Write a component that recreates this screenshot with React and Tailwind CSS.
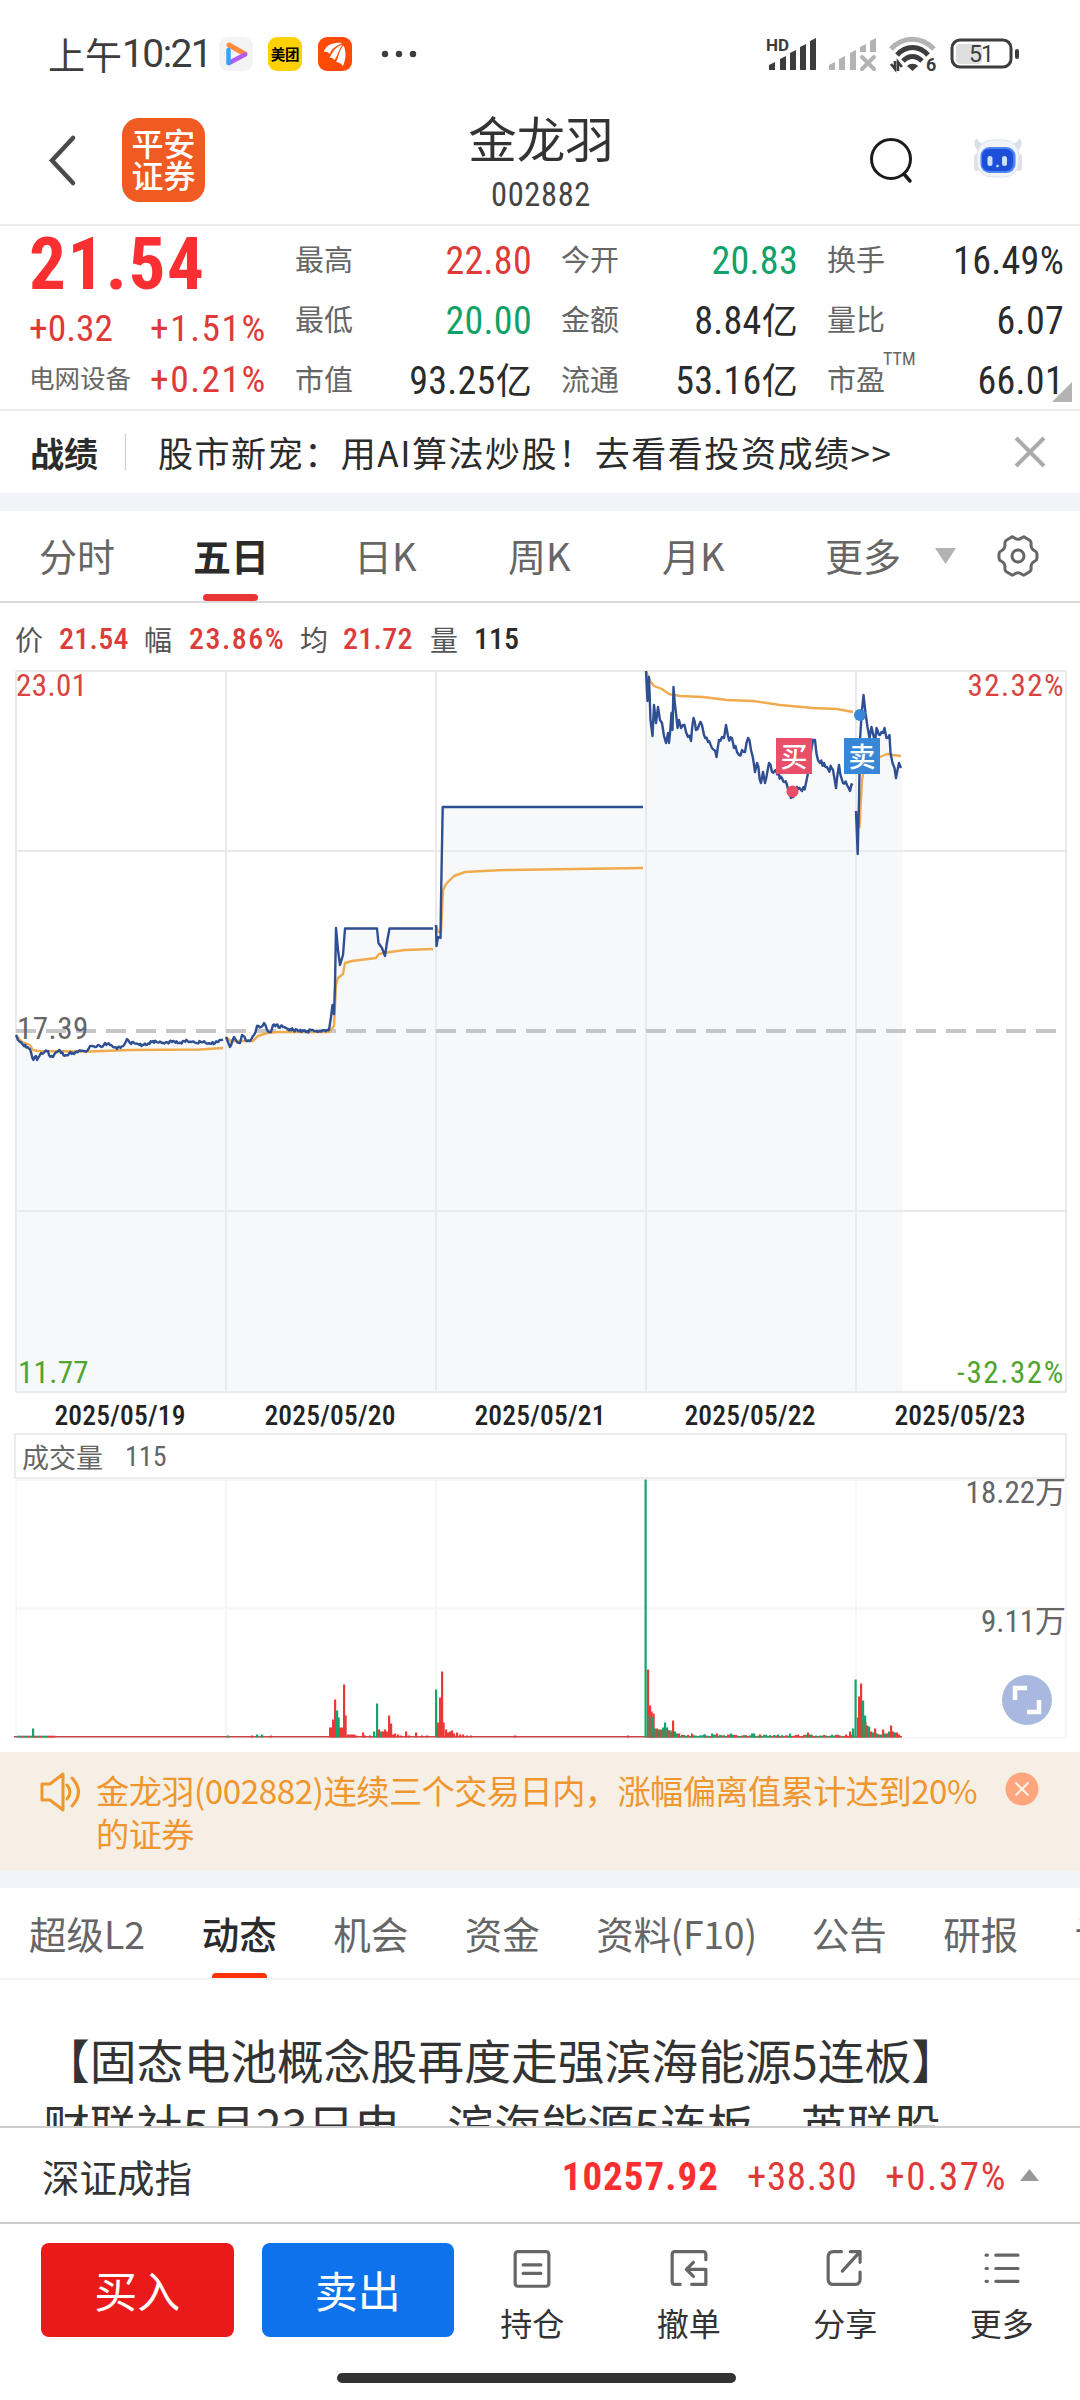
const RED = 'text-[#e03a38]';
const GREEN = 'text-[#0fa268]';
const DARK = 'text-[#2b2b2b]';

const quoteColumns = [
  [
    { label: '最高', value: '22.80', color: RED },
    { label: '最低', value: '20.00', color: GREEN },
    { label: '市值', value: '93.25亿', color: DARK }
  ],
  [
    { label: '今开', value: '20.83', color: GREEN },
    { label: '金额', value: '8.84亿', color: DARK },
    { label: '流通', value: '53.16亿', color: DARK }
  ],
  [
    { label: '换手', value: '16.49%', color: DARK },
    { label: '量比', value: '6.07', color: DARK },
    { label: '市盈', sup: 'TTM', value: '66.01', color: DARK }
  ]
];

const dates = ['2025/05/19', '2025/05/20', '2025/05/21', '2025/05/22', '2025/05/23'];

// Price series, one per trading day. noise is the jitter between the key points
const days = [
  {
    noise: 1.6,
    price: [[16,1035],[18,1040],[20,1042],[23,1045],[27.5,1047],[31,1052],[33.4,1060],[36,1056],[37,1060],[41,1053],[48,1051],[49,1055],[53,1057],[57,1052],[59.5,1050],[61,1053],[66,1055],[70.5,1052],[74,1054],[81,1051],[87,1051],[90,1046],[95,1047],[98,1045],[101.5,1047],[105,1043],[110,1045],[113,1047],[117,1049],[124,1045],[127,1039],[130,1043],[138,1044],[146,1045],[153,1041],[162,1043],[172,1042],[179,1043],[184,1041],[191,1042],[196,1043],[203,1042],[215,1043],[223,1039.5]],
    avg: [[16,1035],[22,1042],[30,1045],[33,1050],[38,1051],[90,1051.5],[130,1050],[200,1049.5],[223,1048]]
  },
  {
    noise: 1.6,
    price: [[226,1037],[228,1042],[230,1047],[234,1037],[237,1042],[240,1043],[242,1035],[247,1041],[250,1041],[254,1035],[257,1026],[261,1027],[264,1023],[267,1030],[271,1032],[273,1025],[283,1027],[290,1029],[298,1031],[306,1032],[312,1030],[320,1031],[329,1030],[331,1017],[332.5,1005],[334,1014],[335,985],[336,928]],
    flat: [[336,928],[338,950],[340,965],[343,955],[345,928.5],[377,928.5],[378.5,943],[382,948],[385,956],[387,942],[389.5,928.5],[433,928.5]],
    avg: [[226,1037],[231,1041],[253,1041],[258,1036],[267,1033],[278,1032],[329,1032],[334,1026],[336,985],[338,978],[343,974],[345,963],[352,961],[376,958],[379,954],[390,952],[405,950],[433,949]]
  },
  {
    noise: 0,
    price: [[436,925],[436.5,946],[438,937],[440.5,938],[441,900],[442.7,807],[643,807]],
    avg: [[436,925],[438,932],[441,932],[443,890],[446,884],[450,880],[454,876],[465,872],[483,871],[505,870],[575,869],[643,868]]
  },
  {
    noise: 4,
    price: [[646,671],[647.5,701],[649,677],[650.5,720],[652.5,736],[654,705],[656,723],[658,707],[660,720],[662,723],[664,736],[666,743],[668,733],[669,743],[671.5,713],[672.5,730],[673.5,687],[676,713],[677.5,728],[679,720],[681,728],[683,725],[686,732],[688,737],[691,741],[693.5,718],[696,730],[699,725],[702,725],[704,735],[708,742],[712,748],[714,750],[716.5,757],[719,740],[722,737],[724,738],[726,725],[728,736],[732,738],[734,748],[737,752],[739,755],[742,750],[745,752],[748,738],[751,750],[753,758],[755,772],[757,763],[761,783],[763,772],[765,783],[769,763],[772,772],[776,770],[782,778],[787,785],[792,797],[797,787],[802,791],[806,783],[810,760],[813,740],[815,740],[818,760],[820,763],[824,763],[827,767],[833,770],[836,788],[839,765],[843,783],[847,785],[850,791],[853,785]],
    avg: [[646,671],[650,681],[654,686],[662,689],[669,694],[680,696],[703,697],[727,700],[753,701],[780,705],[813,708],[837,709],[853,712]]
  },
  {
    noise: 3,
    price: [[856,811],[857.7,854],[859,800],[860,740],[861.5,715],[863.5,695],[865.5,713],[867.5,727],[869.5,738],[871.5,727],[875,743],[876.5,728],[880,735],[883,733],[884.5,728],[886.5,738],[889.5,735],[890.5,753],[892.5,763],[894.5,768],[896,778],[897.5,770],[899,763],[901,768]],
    avg: [[856,811],[858,827],[859.5,827],[862,780],[865,763],[880,757],[887,754],[893,755],[901,756]]
  }
];

function rand(seed) {
  const v = Math.sin(seed * 127.1) * 43758.5453;
  return v - Math.floor(v) - 0.5;
}

// Fill the gaps between the key points with small minute-by-minute moves
function jitter(points, noise) {
  if (!noise) return points;
  const out = [points[0]];
  for (let i = 1; i < points.length; i++) {
    const [x0, y0] = points[i - 1];
    const [x1, y1] = points[i];
    const steps = Math.floor((x1 - x0) / 1.1);
    for (let s = 1; s < steps; s++) {
      const x = x0 + ((x1 - x0) * s) / steps;
      const y = y0 + ((y1 - y0) * s) / steps;
      out.push([x, y + rand(x) * 2 * noise]);
    }
    out.push([x1, y1]);
  }
  return out;
}

const toPoints = (points) => points.map((p) => p.join(',')).join(' ');

// [x, height, r = up / g = down]
const volumeBars = [
  [33,9,'g'],[228,2,'g'],[252,2,'r'],[257,3,'g'],[262,3,'g'],[271,2,'r'],
  [330,10,'r'],[332,10,'r'],[333,18,'r'],[335,38,'r'],[337,27,'g'],[338.5,20,'g'],[340,10,'r'],[342,10,'r'],[344,53,'r'],[345.5,22,'r'],
  [348,3,'r'],[350,3,'r'],[352,3,'r'],[354,3,'r'],[356,2,'r'],[363,5,'r'],[365,2,'r'],[370,2,'r'],[374,6,'g'],[377,34,'g'],[379,8,'r'],[381,6,'g'],[383,6,'r'],[385,8,'r'],[387,6,'r'],[389,22,'r'],[391,14,'r'],[393,3,'r'],[395,4,'r'],[398,3,'r'],[401,2,'r'],[406,6,'r'],[409,2,'r'],[416,5,'r'],[422,2,'r'],[427,2,'r'],
  [436,48,'g'],[438,15,'r'],[440,40,'r'],[442,66,'r'],[443.5,15,'r'],[446,8,'r'],[448,5,'r'],[450,6,'r'],[452,7,'r'],[454,4,'r'],[457,5,'r'],[460,3,'r'],[463,3,'r'],[467,2,'r'],[471,2,'r'],[515,2,'r'],[628,2,'r'],
  [648,68,'r'],[650,32,'r'],[649.5,22,'g'],[651.5,26,'r'],[653.5,24,'r'],[652.5,20,'g'],[655,9,'g'],[657,9,'r'],[659,8,'g'],[661,8,'r'],[663,10,'g'],[665,15,'g'],[667,10,'g'],[669,7,'r'],[671,6,'g'],[673,17,'r'],[675,6,'g'],[677,4,'g'],[679,4,'r'],[645.5,258,'g'],
  [692,4,'r'],[705,3,'g'],[712,4,'g'],[717,4,'r'],[731,4,'g'],[752,4,'g'],[754,4,'g'],[760,3,'r'],[778,3,'g'],[790,4,'g'],[808,5,'r'],[811,3,'g'],[838,2,'r'],[846,3,'r'],[850,6,'r'],[853,9,'g'],
  [859,41,'r'],[861,54,'r'],[858,20,'r'],[855.5,58,'g'],[863,37,'g'],[865,22,'g'],[867,12,'r'],[869,11,'g'],[871,6,'r'],[873,5,'g'],[875,9,'r'],[877,4,'g'],[879,3,'r'],[881,3,'g'],[883,8,'r'],[885,4,'g'],[887,4,'r'],[889,6,'g'],[891,12,'r'],[893,6,'r'],[895,5,'g'],[897,5,'r'],[899,3,'r']
];

const infoTabs = ['超级L2', '动态', '机会', '资金', '资料(F10)', '公告', '研报', '诊股'];

function StatusBar() {
  return (
    <div className="flex h-[108px] items-center pl-[48px] pr-[60px] text-[#3d3d3d]">
      <div className="flex items-center text-[37px] leading-[44px]">
        上午
        <span className="font-['Roboto',sans-serif] text-[39px] tracking-[-1.6px]">10:21</span>
      </div>
      <svg className="ml-[8px]" width="34" height="34" viewBox="0 0 34 34">
        <rect width="34" height="34" rx="9" fill="#f3f3f5" />
        <path d="M10 8l16 9" stroke="#ff8b3d" strokeWidth="5" strokeLinecap="round" />
        <path d="M26 17.500L10 26" stroke="#b05cf0" strokeWidth="4.500" strokeLinecap="round" />
        <path d="M9.500 13v13" stroke="#2fa4f8" strokeWidth="4.500" strokeLinecap="round" />
      </svg>
      <div className="ml-[15px] flex h-[34px] w-[34px] items-center justify-center rounded-[9px] bg-[#ffd100] text-[14.500px] font-bold leading-[20px] text-black">
        美团
      </div>
      <svg className="ml-[16px]" width="34" height="34" viewBox="0 0 34 34">
        <rect width="34" height="34" rx="9" fill="#ff4a08" />
        <path d="M6 15C7 9 14 5 24 6C18 9 13 12 12 17C10 15 8 14.500 6 15z" fill="#fff" />
        <path d="M11.500 21C14 17 16 10 24.500 7.500C21 12 20 18 16.500 23C15 21 13 20.500 11.500 21z" fill="#fff" />
        <path d="M18 25C21 20 21 13 25.500 8.500C28 13 28.500 21 25 29C23 26.500 20.500 25 18 25z" fill="#fff" />
      </svg>
      <svg className="ml-[28px]" width="38" height="8" viewBox="0 0 38 8" fill="#3d3d3d">
        <circle cx="5" cy="4" r="3.200" />
        <circle cx="19" cy="4" r="3.200" />
        <circle cx="33" cy="4" r="3.200" />
      </svg>

      <div className="ml-auto flex items-center">
        <svg width="52" height="36" viewBox="0 0 52 36" fill="#3d3d3d">
          <text x="0" y="14.500" fontSize="17" fontWeight="700" fontFamily="Roboto, sans-serif">HD</text>
          <path d="M3 34v-5l6-3v8zM14 34V23l6-3v14zM24 34V17l6-3v20zM34 34V11l6-3v26zM44 34V5l6-3v32z" />
        </svg>
        <svg className="ml-[10px]" width="50" height="36" viewBox="0 0 50 36" fill="#b3b3b3">
          <path d="M1 34v-5l6-3v8zM11 34V23l6-3v14zM22 34V17l6-3v20zM32 16V11l6-3v8zM42 16V5l6-3v14z" />
          <path d="M34 21l12 12M46 21L34 33" stroke="#b3b3b3" strokeWidth="4" strokeLinecap="round" />
        </svg>
        <svg className="ml-[10px]" width="50" height="38" viewBox="0 0 50 38" fill="none" stroke="#3d3d3d" strokeWidth="5">
          <path d="M3 14C15 1 33 1 46 14" stroke="#b3b3b3" />
          <path d="M9 20C18 10 31 10 40 20" />
          <path d="M15 26C21 20 28 20 34 26" />
          <path d="M19 31C22 28 27 28 30 31L24.500 36z" fill="#3d3d3d" stroke="none" />
          <path d="M3 29l4 5V26M10 36v-9l4 5" strokeWidth="2.600" />
          <text x="38" y="36" fontSize="18" fontWeight="700" fill="#3d3d3d" stroke="none" fontFamily="Roboto, sans-serif">6</text>
        </svg>
        <svg className="ml-[12px]" width="70" height="32" viewBox="0 0 70 32">
          <rect x="6" y="6" width="26" height="20" rx="4" fill="#dedede" />
          <rect x="2" y="2" width="59" height="27" rx="8" fill="none" stroke="#3d3d3d" strokeWidth="3" />
          <rect x="65" y="11" width="4" height="10" rx="2" fill="#3d3d3d" />
          <text x="19" y="24" fontSize="23" fill="#3d3d3d" fontFamily="Roboto, sans-serif" letterSpacing="-1">51</text>
        </svg>
      </div>
    </div>
  );
}

function Header() {
  return (
    <div className="flex h-[118px] items-center border-b-2 border-[#ececec] pl-[46px] pr-[56px]">
      <svg width="32" height="56" viewBox="0 0 32 56" fill="none" stroke="#4a4a4a" strokeWidth="4.500" className="mt-[-14px]">
        <path d="M27 7L6 29.500L27 52" strokeLinecap="round" />
      </svg>
      <div className="mt-[-13px] ml-[44px] flex h-[84px] w-[83px] flex-col items-center justify-center rounded-[17px] bg-[#f05a23] pb-[4px] text-[32px] font-medium leading-[32px] text-white">
        <span>平安</span>
        <span>证券</span>
      </div>
      <div className="flex flex-1 flex-col items-center pl-[8px]">
        <div className="mt-[-14px] text-[48.500px] leading-[60px] text-[#333]">金龙羽</div>
        <div className="mt-[12px] font-['Roboto_Condensed',sans-serif] text-[32.500px] leading-[32px] tracking-[0.600px] text-[#444]">002882</div>
      </div>
      <svg width="46" height="48" viewBox="0 0 46 48" fill="none" stroke="#1c1c1c" strokeWidth="3" className="mt-[-12px]">
        <circle cx="22" cy="23" r="19.500" />
        <path d="M35 38l6 7" strokeWidth="3.500" strokeLinecap="round" />
      </svg>
      <svg width="52" height="44" viewBox="0 0 52 44" className="mt-[-16px] ml-[57px]">
        <path d="M6 15C1 9 2 4 5 2C6 7 10 8 15 8z" fill="#d9dee9" />
        <path d="M46 15C51 9 50 4 47 2C46 7 42 8 37 8z" fill="#d9dee9" />
        <rect x="2" y="18" width="6" height="17" rx="3" fill="#e3dfe6" />
        <rect x="44" y="18" width="6" height="17" rx="3" fill="#e3dfe6" />
        <rect x="5" y="4" width="42" height="37" rx="15" fill="#f1f3f8" stroke="#dde2ec" />
        <rect x="8.500" y="11" width="35" height="26" rx="9" fill="#4d84f2" />
        <rect x="10" y="13" width="31" height="22" rx="7" fill="#1d50d8" />
        <rect x="15.500" y="20" width="5" height="10" rx="2.500" fill="#cfe0ff" />
        <rect x="30" y="20" width="5" height="10" rx="2.500" fill="#cfe0ff" />
        <circle cx="25.500" cy="30" r="1.300" fill="#cfe0ff" />
      </svg>
    </div>
  );
}

function Quote() {
  return (
    <div className="relative flex h-[185px] border-b-2 border-[#ececec] font-['Roboto_Condensed','Noto_Sans_CJK_SC',sans-serif]">
      <div className="flex w-[295px] flex-col pl-[29px]">
        <div className="h-[78px] text-[73px] font-bold leading-[76px] tracking-[1.500px] text-[#fb2f32]">21.54</div>
        <div className="flex h-[50px] items-center text-[37.500px] leading-none text-[#e03a38]">
          <span className="w-[121px]">+0.32</span>
          <span className="tracking-[1.500px]">+1.51%</span>
        </div>
        <div className="flex h-[52px] items-center text-[37.500px] leading-none text-[#e03a38]">
          <span className="w-[121px] text-[25.500px] text-[#666]">电网设备</span>
          <span className="tracking-[1.500px]">+0.21%</span>
        </div>
      </div>
      <div className="flex gap-[29px] pt-[5px]">
        {quoteColumns.map((rows, i) => (
          <div key={i} className="w-[237px]">
            {rows.map((row) => (
              <div key={row.label} className="flex h-[60px] items-center justify-between leading-none">
                <span className="relative text-[29px] text-[#666]">
                  {row.label}
                  {row.sup && <span className="absolute top-[-17px] left-[56px] text-[18px]">{row.sup}</span>}
                </span>
                <span className={`text-[38px] tracking-[0.300px] ${row.color}`}>
                  {row.value.replace('亿', '')}
                  {row.value.endsWith('亿') && <span className="text-[36px]">亿</span>}
                </span>
              </div>
            ))}
          </div>
        ))}
      </div>
      <svg className="absolute right-[8px] bottom-[7px]" width="20" height="20" viewBox="0 0 20 20">
        <path d="M20 0V20H0z" fill="#b3b3b3" />
      </svg>
    </div>
  );
}

function Banner() {
  return (
    <div className="flex h-[82px] items-center pl-[30px] pr-[34px] text-[#2b2b2b]">
      <span className="text-[34px] font-bold">战绩</span>
      <span className="ml-[27px] h-[36px] w-px bg-[#ccc]" />
      <span className="ml-[32px] text-[35px] tracking-[1.550px]">股市新宠：用AI算法炒股！去看看投资成绩&gt;&gt;</span>
      <svg className="ml-auto" width="32" height="32" viewBox="0 0 32 32" stroke="#aaa" strokeWidth="4">
        <path d="M2 2L30 30M30 2L2 30" />
      </svg>
    </div>
  );
}

function PeriodTabs() {
  return (
    <div className="flex h-[92px] items-stretch border-b-2 border-[#d9d9d9] pl-[39px] text-[38px] leading-[88px] text-[#666]">
      <span className="w-[154px]">分时</span>
      <span className="flex w-[161px] flex-col font-bold text-[#2b2b2b]">
        <span className="h-[83px]">五日</span>
        <span className="ml-[10px] h-[8px] w-[55px] rounded-[4px] bg-[#e93535]" />
      </span>
      <span className="w-[154px]">日K</span>
      <span className="w-[154px]">周K</span>
      <span className="w-[163px]">月K</span>
      <span className="w-[110px]">更多</span>
      <svg className="mt-[37px]" width="21" height="16" viewBox="0 0 21 16">
        <path d="M0 0H21L10.500 16z" fill="#b3b3b3" />
      </svg>
      <svg className="mt-[23px] ml-[41px]" width="42" height="44" viewBox="0 0 42 44" fill="none" stroke="#666" strokeWidth="3">
        <path d="M14 3.500Q15.500 2 17.500 4Q21 6.500 24.500 4Q26.500 2 28 3.500L33 6.500Q34.500 8 34 11Q34 15 38 17Q40 18 40 20V24Q40 26 38 27Q34 29 34 33Q34.500 36 33 37.500L28 40.500Q26.500 42 24.500 40Q21 37.500 17.500 40Q15.500 42 14 40.500L9 37.500Q7.500 36 8 33Q8 29 4 27Q2 26 2 24V20Q2 18 4 17Q8 15 8 11Q7.500 8 9 6.500z" strokeLinejoin="round" />
        <circle cx="21" cy="22" r="6" />
      </svg>
    </div>
  );
}

function PriceChart() {
  return (
    <div className="relative ml-[14px] h-[724px] w-[1054px] font-['Roboto_Condensed',sans-serif] text-[31px] leading-[31px]">
      <svg width="1054" height="724" viewBox="14 670 1054 724">
        {days.map((day, i) => {
          const line = [...jitter(day.price, day.noise), ...(day.flat || [])];
          const left = line[0][0];
          // the shaded area runs on to the first minute of the next day
          const right = days[i + 1] ? days[i + 1].price[0][0] : 902.5;
          const lastY = line[line.length - 1][1];
          return (
            <polygon
              key={i}
              points={`${left},1392 ${toPoints(line)} ${right},${lastY} ${right},1392`}
              fill="#f6f8fa"
            />
          );
        })}
        <g stroke="#e9eaec" strokeWidth="2">
          <path d="M16 671H1066M16 851H1066M16 1211H1066M16 1392H1066" />
          <path d="M16 671V1392M226 671V1392M436 671V1392M646 671V1392M856 671V1392M1066 671V1392" />
        </g>
        <path d="M16 1031H1066" stroke="#c6c6c8" strokeWidth="4" strokeDasharray="20 10" />
        {days.map((day, i) => (
          <g key={i} fill="none" strokeLinejoin="round">
            <polyline points={toPoints(day.avg)} stroke="#efab4d" strokeWidth="2.400" />
            <polyline
              points={toPoints([...jitter(day.price, day.noise), ...(day.flat || [])])}
              stroke="#2f4f93"
              strokeWidth="2.400"
            />
          </g>
        ))}
        <circle cx="792.500" cy="791.500" r="6" fill="#e94f68" />
        <circle cx="860" cy="715" r="6" fill="#3887d6" />
      </svg>
      <span className="absolute top-[0px] left-[2px] tracking-[0.400px] text-[#d94340]">23.01</span>
      <span className="absolute top-[0px] right-[3px] tracking-[1.400px] text-[#d94340]">32.32%</span>
      <span className="absolute top-[343px] left-[3px] tracking-[0.500px] text-[#666]">17.39</span>
      <span className="absolute top-[687px] left-[4px] tracking-[0.300px] text-[#4fa52f]">11.77</span>
      <span className="absolute top-[687px] right-[3px] tracking-[1.600px] text-[#4fa52f]">-32.32%</span>
      <span className="absolute top-[68px] left-[762px] flex h-[36px] w-[36px] items-center justify-center bg-[#e94f68] pb-[2px] font-['Noto_Sans_CJK_SC',sans-serif] text-[27px] font-medium text-white">
        买
      </span>
      <span className="absolute top-[68px] left-[830px] flex h-[36px] w-[36px] items-center justify-center bg-[#3887d6] pb-[2px] font-['Noto_Sans_CJK_SC',sans-serif] text-[27px] font-medium text-white">
        卖
      </span>
    </div>
  );
}

function VolumeChart() {
  const base = [];
  for (let x = 18; x < 56; x += 2) base.push([x, 1.8, rand(x) > 0 ? 'g' : 'r']);
  for (let x = 680; x < 856; x += 2) base.push([x, 2 + rand(x) * 2, rand(x + 7) > 0 ? 'r' : 'g']);

  return (
    <div className="relative ml-[14px] h-[261px] w-[1054px] font-['Roboto_Condensed','Noto_Sans_CJK_SC',sans-serif] text-[31px] leading-[30px] text-[#666]">
      <svg width="1054" height="261" viewBox="14 1479 1054 261">
        <path
          d="M16 1480H1066M16 1608.500H1066M16 1738H1066M16 1480V1738M226 1480V1738M436 1480V1738M646 1480V1738M856 1480V1738M1066 1480V1738"
          stroke="#f6f6f7"
          strokeWidth="2"
        />
        <path d="M14 1736.800H902" stroke="#c8464a" strokeWidth="1.600" />
        {[...base, ...volumeBars].map(([x, h, dir], i) => (
          <rect key={i} x={x - 1} y={1737.5 - h} width="2.200" height={h} fill={dir === 'r' ? '#ea3a38' : '#15a36e'} />
        ))}
        <rect x="650" y="1730" width="24" height="7.500" fill="#8a6a4a" opacity="0.500" />
        <rect x="860" y="1722" width="7" height="15.500" fill="#8a6a4a" opacity="0.500" />
      </svg>
      <span className="absolute top-[-1px] right-[2px]">18.22万</span>
      <span className="absolute top-[128px] right-[2px]">9.11万</span>
      <svg className="absolute top-[196px] right-[16px]" width="50" height="50" viewBox="0 0 50 50" fill="none">
        <circle cx="25" cy="25" r="25" fill="#a9b8de" />
        <path d="M13 25V13H25M37 25V37H25" stroke="#fff" strokeWidth="4.500" />
      </svg>
    </div>
  );
}

function Notice() {
  return (
    <div className="flex h-[119px] shrink-0 bg-[#f6efe5] pt-[17px] pl-[39px]">
      <svg className="mt-[2px]" width="44" height="42" viewBox="0 0 44 42" fill="none" stroke="#f0962f" strokeWidth="3" strokeLinejoin="round">
        <path d="M3 13H11L24 3V39L11 29H3z" />
        <path d="M28 14Q34 21 28 28M33 7Q46 21 33 35" strokeLinecap="round" />
      </svg>
      <p className="ml-[13px] w-[890px] text-[33.200px] leading-[42.500px] tracking-[-0.550px] whitespace-nowrap text-[#f0962f]">
        金龙羽<span className="tracking-[-0.400px]">(002882)</span>连续三个交易日内，涨幅偏离值累计达到20%
        <br />
        的证券
      </p>
      <svg className="mt-[3px] ml-[19px]" width="34" height="34" viewBox="0 0 34 34">
        <circle cx="17" cy="17" r="16.500" fill="#ffa67f" />
        <path d="M10.500 10.500L23.500 23.500M23.500 10.500L10.500 23.500" stroke="#fff3ea" strokeWidth="2" />
      </svg>
    </div>
  );
}

function InfoTabs() {
  return (
    <div className="flex h-[92px] shrink-0 gap-[56.500px] overflow-hidden whitespace-nowrap border-b-2 border-[#f2f2f2] pl-[29px] text-[37.500px] leading-[90px] text-[#666]">
      {infoTabs.map((tab) =>
        tab === '动态' ? (
          <span key={tab} className="flex shrink-0 flex-col items-center font-medium text-[#2b2b2b]">
            <span className="h-[85px]">{tab}</span>
            <span className="h-[6px] w-[55px] rounded-t-[4px] bg-[#fb3205]" />
          </span>
        ) : (
          <span key={tab} className={tab === '资料(F10)' ? 'w-[159px] shrink-0 tracking-[-0.300px]' : 'shrink-0'}>{tab}</span>
        )
      )}
    </div>
  );
}

function BottomItem({ label, children }) {
  return (
    <div className="flex w-[156.500px] flex-col items-center">
      <svg width="44" height="44" viewBox="0 0 44 44" fill="none" stroke="#666" strokeWidth="3.600" strokeLinecap="round" strokeLinejoin="round" className="mt-[6px]">
        {children}
      </svg>
      <span className="mt-[12px] text-[32px] leading-[44px] text-[#333]">{label}</span>
    </div>
  );
}

function BottomBar() {
  return (
    <div className="flex h-[120px] pt-[19px] pl-[41px]">
      <button className="h-[94px] w-[193px] rounded-[8px] bg-[#ea1a1a] pb-[2px] text-[43px] text-white">买入</button>
      <button className="ml-[28px] h-[94px] w-[193px] rounded-[8px] bg-[#0e72ec] pb-[2px] text-[43px] text-white">卖出</button>
      <div className="flex">
        <BottomItem label="持仓">
          <rect x="3" y="3" width="38" height="39" rx="3" />
          <path d="M12 18H32M12 27.500H32" />
        </BottomItem>
        <BottomItem label="撤单">
          <path d="M41 12V6Q41 3 38 3H6Q3 3 3 6V37Q3 40 6 40H12" />
          <path d="M25 40H41V23H20M27 15L19 23L27 31" />
        </BottomItem>
        <BottomItem label="分享">
          <path d="M18 3H9Q3 3 3 9V34Q3 40 9 40H33Q39 40 39 34V26" />
          <path d="M28 3H39V15M39 3L19 25" />
        </BottomItem>
        <BottomItem label="更多">
          <path d="M4 7H5.500M15 7H40M4 22H5.500M15 22H40M4 36.500H5.500M15 36.500H40" />
        </BottomItem>
      </div>
    </div>
  );
}

export default function App() {
  return (
    <div className="flex h-[2400px] w-[1080px] flex-col overflow-hidden bg-white font-['Noto_Sans_CJK_SC',sans-serif]">
      <StatusBar />
      <Header />
      <Quote />
      <Banner />
      <div className="h-[18px] bg-[#f2f4f9]" />
      <PeriodTabs />

      <div className="flex h-[67px] items-center pl-[15px] pt-[4px] font-['Roboto_Condensed',sans-serif] text-[30px] leading-none text-[#dc3c3a]">
        <span className="w-[44px] font-['Noto_Sans_CJK_SC',sans-serif] text-[28px] text-[#555]">价</span>
        <span className="w-[85px] font-medium tracking-[0.300px]">21.54</span>
        <span className="w-[45px] font-['Noto_Sans_CJK_SC',sans-serif] text-[28px] text-[#555]">幅</span>
        <span className="w-[111px] font-medium tracking-[1.500px]">23.86%</span>
        <span className="w-[43px] font-['Noto_Sans_CJK_SC',sans-serif] text-[28px] text-[#555]">均</span>
        <span className="w-[87px] font-medium tracking-[0.300px]">21.72</span>
        <span className="w-[44px] font-['Noto_Sans_CJK_SC',sans-serif] text-[28px] text-[#555]">量</span>
        <span className="font-medium text-[#2b2b2b]">115</span>
      </div>
      <PriceChart />

      <div className="ml-[15px] flex h-[39px] w-[1050px] items-center font-['Roboto_Condensed',sans-serif] text-[27.500px] font-medium leading-none text-[#222]">
        {dates.map((date) => (
          <span key={date} className="w-[210px] pt-[4px] text-center tracking-[0.200px]">{date}</span>
        ))}
      </div>
      <div className="ml-[14px] flex h-[46px] w-[1053px] items-center border-2 border-[#ececec] pt-[2px] pl-[6px] text-[27px] text-[#666]">
        成交量
        <span className="ml-[22px] font-['Roboto_Condensed',sans-serif] text-[28px]">115</span>
      </div>
      <VolumeChart />

      <div className="h-[12px] shrink-0" />
      <Notice />
      <div className="h-[17px] shrink-0 bg-[#f2f4f9]" />
      <InfoTabs />

      <div className="h-[146px] shrink-0 overflow-hidden pt-[46px] pl-[43px] text-[46.800px] leading-[65px] whitespace-nowrap text-[#333]">
        <p>【固态电池概念股再度走强滨海能源5连板】</p>
        <p className="tracking-[-0.100px]">财联社5月23日电，滨海能源5连板，英联股</p>
      </div>

      <div className="flex h-[98px] shrink-0 items-center border-y-2 border-[#ccc] pr-[41px] pl-[42px] pt-[2px] text-[37.500px] leading-none text-[#333]">
        深证成指
        <div className="ml-auto flex items-center pt-[2px] font-['Roboto_Condensed',sans-serif] text-[39px] text-[#e03a38]">
          <span className="font-bold tracking-[1px] text-[#fb2f32]">10257.92</span>
          <span className="ml-[28px] tracking-[0.600px]">+38.30</span>
          <span className="ml-[28px] tracking-[1.600px]">+0.37%</span>
          <svg className="ml-[13px] mt-[-4px]" width="19" height="12" viewBox="0 0 19 12">
            <path d="M9.500 0L19 12H0z" fill="#999" />
          </svg>
        </div>
      </div>
      <BottomBar />
      <div className="ml-[337px] mt-[29px] h-[10px] w-[399px] rounded-full bg-[#333]" />
    </div>
  );
}
